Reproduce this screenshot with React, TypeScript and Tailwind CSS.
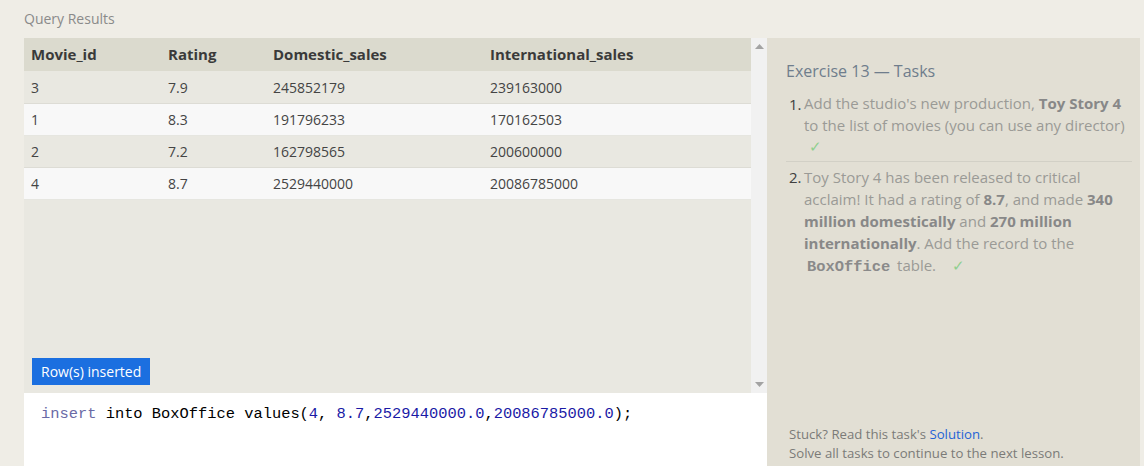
import React from 'react';

const rows = [
  ['3', '7.9', '245852179', '239163000'],
  ['1', '8.3', '191796233', '170162503'],
  ['2', '7.2', '162798565', '200600000'],
  ['4', '8.7', '2529440000', '20086785000'],
];

function Check() {
  return <span className="text-[#8fcf8f] font-normal">✓</span>;
}

export default function App() {
  return (
    <div className="w-[1144px] h-[466px] overflow-hidden bg-[#efede6] font-['Open_Sans',sans-serif]">
      <div className="h-[38px] pl-6 pt-[8px] text-[14px] text-[#8a8a8a]">Query Results</div>

      <div className="flex h-[428px]">
        {/* results + editor */}
        <div className="ml-6 w-[743px] flex flex-col">
          <div className="h-[355px] flex">
            <div className="flex-1 bg-[#e9e8e1] flex flex-col">
              <table className="w-full text-left text-[14px] text-[#444] border-collapse">
                <thead>
                  <tr className="h-[33px] bg-[#dbdace]">
                    <th className="pl-[7px] w-[144px] text-[15px] font-bold text-[#3a3a3a]">Movie_id</th>
                    <th className="w-[105px] text-[15px] font-bold text-[#3a3a3a]">Rating</th>
                    <th className="w-[217px] text-[15px] font-bold text-[#3a3a3a]">Domestic_sales</th>
                    <th className="text-[15px] font-bold text-[#3a3a3a]">International_sales</th>
                  </tr>
                </thead>
                <tbody>
                  {rows.map((r, i) => (
                    <tr
                      key={i}
                      className={
                        i % 2 === 0
                          ? 'h-[32px] bg-[#e9e8e1] border-b border-[#dddcd5]'
                          : 'h-[32px] bg-[#f8f8f8] border-b border-[#e6e6e0]'
                      }
                    >
                      <td className="pl-[7px] pt-[1px]">{r[0]}</td>
                      <td className="pt-[1px]">{r[1]}</td>
                      <td className="pt-[1px]">{r[2]}</td>
                      <td className="pt-[1px]">{r[3]}</td>
                    </tr>
                  ))}
                </tbody>
              </table>
              <div className="mt-auto mb-2 ml-2 self-start h-[27px] px-[9px] flex items-center bg-[#1b6fe0] text-white text-[14px]">
                Row(s) inserted
              </div>
            </div>
            <div className="w-4 bg-[#f1f1f1] flex flex-col items-center justify-between py-[6px]">
              <svg width="9" height="5" viewBox="0 0 9 5">
                <path d="M4.5 0L9 5H0z" fill="#a3a3a3" />
              </svg>
              <svg width="9" height="5" viewBox="0 0 9 5">
                <path d="M0 0h9L4.5 5z" fill="#a3a3a3" />
              </svg>
            </div>
          </div>
          <div className="flex-1 bg-white pl-[17px] pt-[10px] font-['Liberation_Mono',monospace] text-[15.4px] text-black whitespace-pre">
            <span className="text-[#6a6aa6]">insert</span> into BoxOffice values(
            <span className="text-[#1a1aa6]">4</span>, <span className="text-[#1a1aa6]">8.7</span>,
            <span className="text-[#1a1aa6]">2529440000.0</span>,<span className="text-[#1a1aa6]">20086785000.0</span>);
          </div>
        </div>

        {/* tasks panel */}
        <div className="w-[373px] bg-[#e2dfd4] flex flex-col pl-[19px] pr-2 pt-[21px]">
          <div className="text-[16px] text-[#6f7d8c]">Exercise 13 — Tasks</div>
          <ol className="mt-[10px] text-[15px] leading-[22px] text-[#9a9a96]">
            <li className="flex pb-[3px] border-b border-[#d2d0c6]">
              <span className="w-[18px] shrink-0 pl-[3px] text-[#3f3f3f]">1.</span>
              <span className="leading-[21.5px]">
                Add the studio's new production, <b className="text-[#888]">Toy Story 4</b> to the list of movies (you
                can use any director)
                <br />
                <span className="pl-[5px]">
                  <Check />
                </span>
              </span>
            </li>
            <li className="flex pt-[4px]">
              <span className="w-[18px] shrink-0 pl-[3px] text-[#3f3f3f]">2.</span>
              <span>
                Toy Story 4 has been released to critical acclaim! It had a rating of{' '}
                <b className="text-[#888]">8.7</b>, and made <b className="text-[#888]">340 million domestically</b> and{' '}
                <b className="text-[#888]">270 million internationally</b>. Add the record to the{' '}
                <code className="px-[3px] font-['Liberation_Mono',monospace] text-[15.4px] font-bold text-[#8a8a8a]">
                  BoxOffice
                </code>{' '}
                table.
                <span className="ml-[16px]">
                  <Check />
                </span>
              </span>
            </li>
          </ol>
          <div className="mt-auto mb-[3px] pl-[3px] text-[13.2px] leading-[19px] text-[#7b7b78]">
            Stuck? Read this task's <span className="text-[#1f63d6]">Solution</span>.
            <br />
            Solve all tasks to continue to the next lesson.
          </div>
        </div>
      </div>
    </div>
  );
}
